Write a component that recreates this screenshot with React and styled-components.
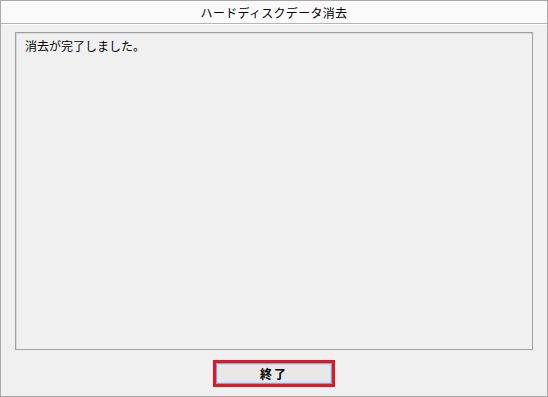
import React from "react";
import styled, { createGlobalStyle } from "styled-components";

const GlobalStyle = createGlobalStyle`
  html, body {
    margin: 0;
    padding: 0;
    background: #f0f0f0;
  }
  body {
    font-family: "Noto Sans CJK JP", "Noto Sans", sans-serif;
  }
`;

export default function App() {
  return (
    <>
      <GlobalStyle />
      <Styled.Window>
        <Styled.TitleBar>ハードディスクデータ消去</Styled.TitleBar>
        <Styled.Body>
          <Styled.Log>消去が完了しました。</Styled.Log>
          <Styled.Footer>
            <Styled.Highlight>
              <Styled.Button>終了</Styled.Button>
            </Styled.Highlight>
          </Styled.Footer>
        </Styled.Body>
      </Styled.Window>
    </>
  );
}

const Styled = {
  Window: styled.div`
    box-sizing: border-box;
    width: 548px;
    height: 397px;
    border: 1px solid #a8a8a8;
    background: #f0f0f0;
    display: flex;
    flex-direction: column;
  `,
  TitleBar: styled.div`
    height: 22px;
    flex: none;
    display: flex;
    align-items: center;
    justify-content: center;
    background: #fafafa;
    border-bottom: 1px solid #b4b4b4;
    box-shadow: 0 1px 0 #ffffff;
    font-size: 12px;
    color: #000;
    letter-spacing: 0.3px;
  `,
  Body: styled.div`
    flex: 1;
    display: flex;
    flex-direction: column;
    padding: 8px 14px 9px 14px;
  `,
  Log: styled.div`
    box-sizing: border-box;
    height: 318px;
    border: 1px solid #a0a0a0;
    box-shadow: inset 1px 1px 0 #d8d8d8;
    background: #f0f0f0;
    padding: 5px 9px;
    font-size: 12px;
    line-height: 16px;
    color: #000;
  `,
  Footer: styled.div`
    flex: 1;
    display: flex;
    justify-content: center;
    align-items: flex-end;
  `,
  Highlight: styled.div`
    box-sizing: border-box;
    width: 122px;
    height: 27px;
    border: 3px solid #e8141e;
    display: flex;
  `,
  Button: styled.button`
    flex: 1;
    margin: 0;
    border: 1px solid #7ea6d4;
    box-shadow: inset 0 0 0 1px #c6dcf2;
    background: #e8e8e8;
    font-family: "Noto Sans CJK JP", "Noto Sans", sans-serif;
    font-size: 12px;
    font-weight: bold;
    color: #000;
    padding: 0;
    letter-spacing: 2px;
  `,
};
